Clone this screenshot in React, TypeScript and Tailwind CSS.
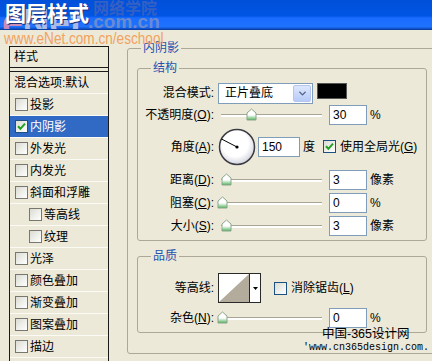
import { ChevronDown } from 'lucide-react'

type Item = { label: string; checked?: boolean; indent?: boolean; selected?: boolean }

const items: Item[] = [
  { label: '投影' },
  { label: '内阴影', checked: true, selected: true },
  { label: '外发光' },
  { label: '内发光' },
  { label: '斜面和浮雕' },
  { label: '等高线', indent: true },
  { label: '纹理', indent: true },
  { label: '光泽' },
  { label: '颜色叠加' },
  { label: '渐变叠加' },
  { label: '图案叠加' },
  { label: '描边' },
  { label: '' },
]

// XP 风格复选框
function Check({ checked = false, grey = false }: { checked?: boolean; grey?: boolean }) {
  return (
    <span
      className={`inline-flex h-[13px] w-[13px] shrink-0 items-center justify-center border bg-[linear-gradient(135deg,#dcdcd4,#ffffff)] ${
        grey ? 'border-[#77776f]' : 'border-[#1c5180]'
      }`}
    >
      {checked && (
        <svg width="9" height="9" viewBox="0 0 9 9">
          <path d="M1 4.2 L3.4 6.8 L8 1.6" stroke="#21a121" strokeWidth="2" fill="none" />
        </svg>
      )}
    </span>
  )
}

function Thumb() {
  return (
    <svg width="11" height="13" viewBox="0 0 11 13">
      <defs>
        <linearGradient id="tg" x1="0" y1="0" x2="0" y2="1">
          <stop offset="0.55" stopColor="#ffffff" />
          <stop offset="1" stopColor="#4fb35a" />
        </linearGradient>
      </defs>
      <path d="M1 5 L5.5 1 L10 5 V12 H1 Z" fill="url(#tg)" stroke="#8ca58c" strokeWidth="1" />
    </svg>
  )
}

function Slider({ left }: { left: number }) {
  return (
    <div className="relative h-[14px] w-[111px]">
      <div className="absolute left-[3px] right-[7px] top-[6px] h-[3px] border-t border-[#a7a596] bg-white" />
      <div className="absolute top-0" style={{ left: left + 3 }}>
        <Thumb />
      </div>
    </div>
  )
}

function Field({ value, w = 'w-[38px]' }: { value: string; w?: string }) {
  return (
    <div className={`flex h-[20px] ${w} items-center border border-[#7f9db9] bg-white pl-[3px]`}>{value}</div>
  )
}

function Label({ children }: { children: React.ReactNode }) {
  return <div className="w-[77px] shrink-0 whitespace-nowrap pr-[1px] text-right">{children}</div>
}

function SliderRow({ label, left, value, unit, h = 'h-[23px]' }: { label: React.ReactNode; left: number; value: string; unit: string; h?: string }) {
  return (
    <div className={`flex ${h} items-center`}>
      <Label>{label}</Label>
      <div className="ml-[3px] flex items-center">
        <Slider left={left} />
        <Field value={value} />
        <span className="ml-[3px]">{unit}</span>
      </div>
    </div>
  )
}

export default function App() {
  return (
    <div className="relative h-[361px] w-[432px] overflow-hidden bg-[#ece9d8] font-['Liberation_Sans','Noto_Sans_CJK_SC',sans-serif] text-[12px] leading-[16px] text-black">
      {/* 标题栏 */}
      <div className="relative h-[30px] overflow-hidden border-b border-[#0a3fa8] bg-[linear-gradient(to_bottom,#0150da_0%,#0055e3_55%,#1a6cff_62%,#1f72ff_92%,#0b4cc0_100%)]">
        <div className="absolute left-[2px] top-[5px] text-[37px] font-bold leading-[36px] text-[#a9bbe4]">
          <span className="text-[#c98cb6]">e</span>Net
        </div>
        <div className="absolute left-[93px] top-[0px] text-[16px] font-bold leading-[18px] text-[#3460c4]">网络学院</div>
        <div className="absolute left-[88px] top-[12px] text-[19px] font-bold leading-[20px] text-[#6a8bd0]">.com.cn</div>
        <div className="relative pl-[5px] pt-[2px] text-[21px] font-bold leading-[24px] text-white [text-shadow:1px_1px_0_#1b2f7a]">图层样式</div>
      </div>

      {/* 主体 */}
      <div className="flex h-[331px] items-start overflow-hidden">
        {/* 左侧样式列表 */}
        <div className="ml-[9px] mt-[16px] h-[320px] w-[100px] shrink-0 overflow-hidden border border-b-0 border-[#1a1a1a]">
          <div className="flex h-[21px] items-center border-b border-[#1a1a1a] pl-[4px]">样式</div>
          <div className="mt-[3px] border-t border-[#1a1a1a]">
            <div className="flex h-[22px] items-center border-b border-[#fbfaf4] pl-[4px]">混合选项:默认</div>
            {items.map((it, i) => (
              <div
                key={i}
                className={`flex h-[22px] items-center border-b border-[#fbfaf4] ${it.indent ? 'pl-[19px]' : 'pl-[5px]'} ${
                  it.selected ? 'bg-[#316ac5] text-white' : ''
                }`}
              >
                {it.label && <Check checked={it.checked} grey={!it.selected} />}
                <span className="ml-[2px]">{it.label}</span>
              </div>
            ))}
          </div>
        </div>

        {/* 内阴影 */}
        <fieldset className="ml-[18px] mt-[10px] w-[330px] shrink-0 rounded-[3px] border border-[#aca899] pb-[20px]">
          <legend className="ml-[13px] px-[2px] leading-[16px] text-[#2452b0]">内阴影</legend>

          <fieldset className="ml-[9px] mt-[4px] w-[290px] rounded-[3px] border border-[#aca899] pb-[3px] pt-[6px]">
            <legend className="ml-[13px] px-[2px] leading-[16px] text-[#2452b0]">结构</legend>

            <div className="flex h-[22px] items-center">
              <Label>混合模式:</Label>
              <div className="ml-[3px] flex h-[21px] w-[95px] items-center border border-[#7f9db9] bg-white">
                <span className="flex-1 pl-[6px]">正片叠底</span>
                <span className="mr-[1px] flex h-[17px] w-[18px] items-center justify-center rounded-[2px] border border-[#b4c6f0] bg-[linear-gradient(to_bottom,#dde7fd,#b7cbf8)]">
                  <ChevronDown size={11} strokeWidth={3} color="#4d6185" />
                </span>
              </div>
              <div className="ml-[4px] mb-[4px] h-[16px] w-[30px] border border-[#555] bg-black" />
            </div>

            <SliderRow
              h="h-[21px]"
              label={<>不透明度(<u>O</u>):</>}
              left={25}
              value="30"
              unit="%"
            />

            <div className="flex h-[43px] items-center">
              <Label>角度(<u>A</u>):</Label>
              <svg className="ml-[3px]" width="38" height="38" viewBox="0 0 38 38">
                <defs>
                  <radialGradient id="dg" cx="45%" cy="40%" r="62%">
                    <stop offset="0.6" stopColor="#ffffff" />
                    <stop offset="1" stopColor="#cfd0dc" />
                  </radialGradient>
                </defs>
                <circle cx="19" cy="19" r="17.5" fill="url(#dg)" stroke="#3c3c44" strokeWidth="1.5" />
                <line x1="19" y1="19" x2="3.5" y2="11" stroke="#000" strokeWidth="1" />
                <circle cx="19" cy="19" r="1.6" fill="#000" />
              </svg>
              <div className="ml-[2px]">
                <Field value="150" w="w-[42px]" />
              </div>
              <span className="ml-[3px]">度</span>
              <span className="ml-[8px] flex items-center">
                <Check checked />
              </span>
              <span className="ml-[4px] whitespace-nowrap">使用全局光(<u>G</u>)</span>
            </div>

            <SliderRow label={<>距离(<u>D</u>):</>} left={0} value="3" unit="像素" />
            <SliderRow label={<>阻塞(<u>C</u>):</>} left={-4} value="0" unit="%" />
            <SliderRow label={<>大小(<u>S</u>):</>} left={0} value="3" unit="像素" />
          </fieldset>

          <fieldset className="ml-[9px] mt-[7px] w-[290px] rounded-[3px] border border-[#aca899] pb-[3px] pt-[9px]">
            <legend className="ml-[13px] px-[2px] leading-[16px] text-[#2452b0]">品质</legend>

            <div className="flex h-[30px] items-center">
              <Label>等高线:</Label>
              <div className="ml-[3px] flex h-[30px] border border-[#2a2a2a] bg-white">
                <svg width="30" height="28" viewBox="0 0 30 28">
                  <polygon points="0,28 30,0 30,28" fill="#b3ac9d" />
                </svg>
                <div className="flex w-[11px] items-center justify-center border-l border-[#2a2a2a]">
                  <svg width="5" height="3" viewBox="0 0 5 3">
                    <polygon points="0,0 5,0 2.5,3" fill="#000" />
                  </svg>
                </div>
              </div>
              <span className="ml-[13px] flex items-center">
                <Check />
              </span>
              <span className="ml-[4px] whitespace-nowrap">消除锯齿(<u>L</u>)</span>
            </div>

            <div className="mt-[4px]">
              <SliderRow h="h-[22px]" label={<>杂色(<u>N</u>):</>} left={-4} value="0" unit="%" />
            </div>
          </fieldset>
        </fieldset>
      </div>

      {/* 水印 */}
      <div className="absolute left-[4px] top-[29px] origin-left scale-x-[0.8] whitespace-nowrap text-[17px] leading-[19px] text-[#f2a25f]">
        www.eNet.com.cn/eschool
      </div>
      <div className="absolute left-[322px] top-[327px] whitespace-nowrap text-[12.5px] leading-[15px] text-black">中国-365设计网</div>
      <div className="absolute left-[303px] top-[342px] whitespace-nowrap font-['Liberation_Mono',monospace] text-[10px] leading-[12px] text-black">
        'www.cn365design.com.
      </div>
    </div>
  )
}
